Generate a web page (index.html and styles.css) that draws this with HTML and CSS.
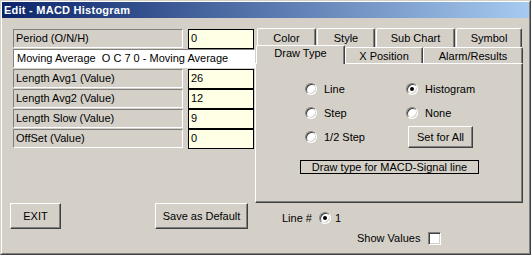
FILE: index.html
```html
<!DOCTYPE html>
<html lang="en">
<head>
    <meta charset="UTF-8">
    <title>Edit - MACD Histogram</title>
    <link rel="stylesheet" href="styles.css">
</head>
<body>
    <div class="window">
        <div class="frame">
            <div class="titlebar">Edit - MACD Histogram</div>
            <div class="client">
                <div class="left">
                    <div class="fields">
                        <div class="row"><div class="label">Period (O/N/H)</div><div class="value">0</div></div>
                        <div class="row"><div class="label wide">Moving Average  O C 7 0 - Moving Average</div></div>
                        <div class="row"><div class="label">Length Avg1 (Value)</div><div class="value">26</div></div>
                        <div class="row"><div class="label">Length Avg2 (Value)</div><div class="value">12</div></div>
                        <div class="row"><div class="label">Length Slow (Value)</div><div class="value">9</div></div>
                        <div class="row"><div class="label">OffSet (Value)</div><div class="value">0</div></div>
                    </div>
                    <div class="buttons">
                        <button class="btn exit">EXIT</button>
                        <button class="btn save">Save as Default</button>
                    </div>
                </div>

                <div class="right">
                    <div class="tabs">
                        <div class="tab-row back">
                            <div class="tab t-color">Color</div>
                            <div class="tab t-style">Style</div>
                            <div class="tab t-sub">Sub Chart</div>
                            <div class="tab t-symbol">Symbol</div>
                        </div>
                        <div class="tab-row front">
                            <div class="tab t-draw active">Draw Type</div>
                            <div class="tab t-xpos">X Position</div>
                            <div class="tab t-alarm">Alarm/Results</div>
                        </div>
                        <div class="panel">
                            <div class="choices">
                                <div class="option"><span class="radio"></span>Line</div>
                                <div class="option"><span class="radio checked"></span>Histogram</div>
                                <div class="option"><span class="radio"></span>Step</div>
                                <div class="option"><span class="radio"></span>None</div>
                                <div class="option"><span class="radio"></span>1/2 Step</div>
                                <div class="option"><button class="btn set-all">Set for All</button></div>
                            </div>
                            <div class="caption">Draw type for MACD-Signal line</div>
                        </div>
                    </div>

                    <div class="extras">
                        <div class="line-no">Line # <span class="radio checked"></span>1</div>
                        <div class="show-values">Show Values <span class="checkbox"></span></div>
                    </div>
                </div>
            </div>
        </div>
    </div>
</body>
</html>
```

FILE: styles.css
```css
* {
    box-sizing: border-box;
}

body {
    margin: 0;
    font-family: "Liberation Sans", Arial, sans-serif;
    font-size: 11px;
    color: #000;
    background: #d4d0c8;
}

.window {
    width: 531px;
    height: 255px;
    border: 1px solid;
    border-color: #d4d0c8 #404040 #404040 #d4d0c8;
    background: #d4d0c8;
}

.frame {
    height: 100%;
    border: 1px solid;
    border-color: #fff #808080 #808080 #fff;
}

.titlebar {
    height: 16px;
    line-height: 16px;
    padding-left: 2px;
    color: #fff;
    font-weight: bold;
    letter-spacing: 0.25px;
    background: linear-gradient(to right, #0a246a, #a6caf0);
}

.client {
    display: flex;
}

/* colonne gauche : champs + boutons */
.left {
    width: 253px;
    flex: none;
}

.fields {
    margin: 11px 0 0 11px;
}

.row {
    display: flex;
    gap: 5px;
    height: 20px;
}

.label {
    width: 170px;
    height: 19px;
    line-height: 17px;
    padding-left: 2px;
    border: 1px solid;
    border-color: #808080 #fff #fff #808080;
    white-space: pre;
}

.label.wide {
    width: 242px;
    flex: none;
    background: #fff;
    padding-left: 3px;
}

.value {
    width: 66px;
    height: 20px;
    line-height: 17px;
    padding-left: 2px;
    border: 1px solid #000;
    background: #ffffe6;
}

.btn {
    font: inherit;
    color: #000;
    background: #d4d0c8;
    border: 1px solid;
    border-color: #fff #404040 #404040 #fff;
    box-shadow: inset -1px -1px #808080;
    padding: 0;
}

.buttons {
    display: flex;
    margin: 54px 0 0 8px;
}

.exit {
    width: 51px;
    height: 26px;
}

.save {
    width: 93px;
    height: 26px;
    margin-left: 94px;
}

/* colonne droite : onglets */
.right {
    width: 268px;
    flex: none;
    padding-top: 10px;
}

.tab-row {
    display: flex;
    position: relative;
}

.tab-row.back {
    height: 19px;
    padding-left: 2px;
    gap: 1px;
}

.tab-row.front {
    height: 18px;
    margin-top: -2px;
    padding-left: 1px;
    z-index: 2;
    align-items: flex-start;
}

.tab {
    height: 19px;
    border: 1px solid;
    border-bottom: none;
    border-color: #fff #404040 transparent #fff;
    border-radius: 2px 2px 0 0;
    box-shadow: inset -1px 0 #808080;
    background: #d4d0c8;
    text-align: center;
    line-height: 18px;
}

.front .tab {
    margin-top: 2px;
    height: 16px;
    line-height: 17px;
}

.front .tab.active {
    margin-top: 0;
    height: 19px;
    line-height: 15px;
}

.t-color { width: 59px; }
.t-style { width: 58px; }
.t-sub { width: 79px; }
.t-symbol { width: 66px; }
.t-draw { width: 89px; }
.t-xpos { width: 78px; }
.t-alarm { width: 100px; }

.panel {
    width: 268px;
    height: 140px;
    border: 1px solid;
    border-color: #fff #404040 #404040 #fff;
    box-shadow: inset -1px -1px #808080;
    padding: 13px 0 0 44px;
}

.choices {
    display: grid;
    grid-template-columns: 101px auto;
    grid-auto-rows: 24px;
    margin-left: 5px;
}

.option {
    display: flex;
    align-items: center;
}

.radio {
    display: inline-block;
    position: relative;
    width: 12px;
    height: 12px;
    margin-right: 7px;
    border-radius: 50%;
    border: 1px solid;
    border-color: #808080 #fff #fff #808080;
    background: #fff;
    box-shadow: inset 1px 1px #404040, inset -1px -1px #d4d0c8;
}

.radio.checked::after {
    content: "";
    position: absolute;
    left: 3px;
    top: 3px;
    width: 4px;
    height: 4px;
    border-radius: 50%;
    background: #000;
}

.set-all {
    width: 65px;
    height: 22px;
    margin-left: 2px;
}

.caption {
    width: 179px;
    height: 14px;
    margin-top: 11px;
    border: 1px solid #000;
    text-align: center;
    line-height: 12px;
}

.extras {
    padding-left: 27px;
}

.line-no {
    display: flex;
    align-items: center;
    height: 16px;
    margin-top: 7px;
}

.line-no .radio {
    margin: 0 4px 0 7px;
}

.show-values {
    display: flex;
    align-items: center;
    height: 16px;
    margin: 4px 0 0 75px;
}

.checkbox {
    display: inline-block;
    width: 13px;
    height: 13px;
    margin-left: 8px;
    border: 1px solid;
    border-color: #808080 #fff #fff #808080;
    background: #fff;
    box-shadow: inset 1px 1px #404040, inset -1px -1px #d4d0c8;
}
```
